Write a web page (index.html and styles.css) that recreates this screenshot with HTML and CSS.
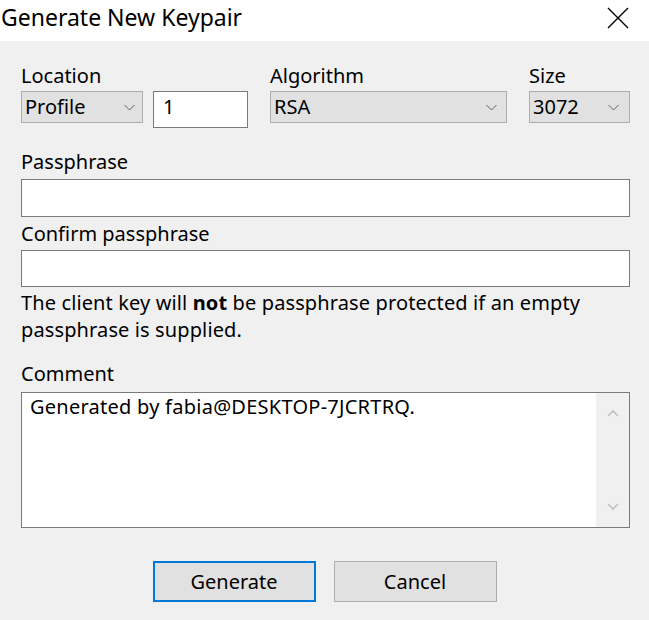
FILE: index.html
```html
<!DOCTYPE html>
<html>
<head>
<meta charset="utf-8">
<link rel="stylesheet" href="styles.css">
</head>
<body>
<div class="window">
  <header class="titlebar">
    <span class="title">Generate New Keypair</span>
    <svg class="close" width="22" height="22" viewBox="0 0 22 22"><path d="M1 1 L21 21 M21 1 L1 21" stroke="#000" stroke-width="1.4" fill="none"/></svg>
  </header>
  <main class="content">
    <div class="row-top">
      <div class="field">
        <span class="label">Location</span>
        <div class="pair">
          <div class="select profile"><span>Profile</span><svg class="chev" width="11" height="7" viewBox="0 0 11 7"><path d="M0.5 1 L5.5 6 L10.5 1" stroke="#606060" stroke-width="1" fill="none"/></svg></div>
          <div class="input short">1</div>
        </div>
      </div>
      <div class="field">
        <span class="label">Algorithm</span>
        <div class="select algo"><span>RSA</span><svg class="chev" width="11" height="7" viewBox="0 0 11 7"><path d="M0.5 1 L5.5 6 L10.5 1" stroke="#606060" stroke-width="1" fill="none"/></svg></div>
      </div>
      <div class="field">
        <span class="label">Size</span>
        <div class="select size"><span>3072</span><svg class="chev" width="11" height="7" viewBox="0 0 11 7"><path d="M0.5 1 L5.5 6 L10.5 1" stroke="#606060" stroke-width="1" fill="none"/></svg></div>
      </div>
    </div>

    <span class="label pass-label">Passphrase</span>
    <div class="input wide"></div>
    <span class="label confirm-label">Confirm passphrase</span>
    <div class="input wide confirm"></div>
    <p class="note">The client key will <b>not</b> be passphrase protected if an empty passphrase is supplied.</p>

    <span class="label comment-label">Comment</span>
    <div class="comment">
      <div class="comment-text">Generated by fabia@DESKTOP-7JCRTRQ.</div>
      <div class="scrollbar">
        <svg width="12" height="8" viewBox="0 0 12 8"><path d="M1 7 L6 2 L11 7" stroke="#c2c2c2" stroke-width="1.6" fill="none"/></svg>
        <svg width="12" height="8" viewBox="0 0 12 8"><path d="M1 1 L6 6 L11 1" stroke="#c2c2c2" stroke-width="1.6" fill="none"/></svg>
      </div>
    </div>

    <div class="buttons">
      <button class="btn primary">Generate</button>
      <button class="btn">Cancel</button>
    </div>
  </main>
</div>
</body>
</html>
```
FILE: styles.css
```css
* { box-sizing: border-box; }
html, body { margin: 0; padding: 0; }
body {
  width: 649px;
  height: 620px;
  background: #f0f0f0;
  font-family: "Noto Sans", "Open Sans", sans-serif;
  font-size: 20px;
  color: #000;
  overflow: hidden;
}
.window { display: flex; flex-direction: column; height: 620px; }
.titlebar {
  height: 41px;
  background: #fff;
  display: flex;
  align-items: flex-start;
  justify-content: space-between;
  padding: 2px 20px 0 1px;
}
.title { font-size: 23px; line-height: 30px; }
.close { margin-top: 5px; width: 22px; height: 22px; }

.content { padding: 0 19px 0 21px; display: flex; flex-direction: column; }
.label { display: block; line-height: 24px; padding-left: 0; }

.row-top {
  margin-top: 23px;
  display: grid;
  grid-template-columns: 227px 237px 101px;
  column-gap: 22px;
  align-items: start;
}
.field { display: flex; flex-direction: column; gap: 3px; }
.pair { display: flex; gap: 10px; align-items: flex-start; }

.select {
  height: 32px;
  background: #e1e1e1;
  border: 1px solid #adadad;
  display: flex;
  align-items: center;
  justify-content: space-between;
  padding: 0 9px 0 3px;
  line-height: 24px;
}
.select.profile { width: 122px; padding-right: 7px; }
.select.algo { padding-right: 9px; }
.select.size { padding-right: 10px; }
.chev { display: block; }

.input {
  background: #fff;
  border: 1px solid #7a7a7a;
  line-height: 24px;
}
.input.short { width: 95px; height: 37px; padding: 3px 9px; }
.input.wide { height: 38px; }
.input.confirm { height: 37px; }

.pass-label { margin-top: 22px; margin-bottom: 5px; }
.confirm-label { margin-top: 5px; margin-bottom: 4px; }

.note { margin: 2px 0 0; line-height: 27px; letter-spacing: 0.12px; }
.note b { font-weight: 700; }

.comment-label { margin-top: 19px; margin-bottom: 6px; }
.comment {
  height: 136px;
  background: #fff;
  border: 1px solid #7a7a7a;
  display: flex;
}
.comment-text { flex: 1; padding: 2px 8px; line-height: 24px; letter-spacing: 0.25px; }
.scrollbar {
  width: 33px;
  background: #f0f0f0;
  display: flex;
  flex-direction: column;
  justify-content: space-between;
  align-items: center;
  padding: 16px 0 16px;
}
.scrollbar svg { display: block; }

.buttons {
  margin-top: 33px;
  display: flex;
  justify-content: center;
  gap: 18px;
  padding-right: 2px;
}
.btn {
  width: 163px;
  height: 41px;
  background: #e1e1e1;
  border: 1px solid #adadad;
  font-family: inherit;
  font-size: 20px;
  color: #000;
  padding: 0;
}
.btn.primary { border: 2px solid #0078d7; }
```
